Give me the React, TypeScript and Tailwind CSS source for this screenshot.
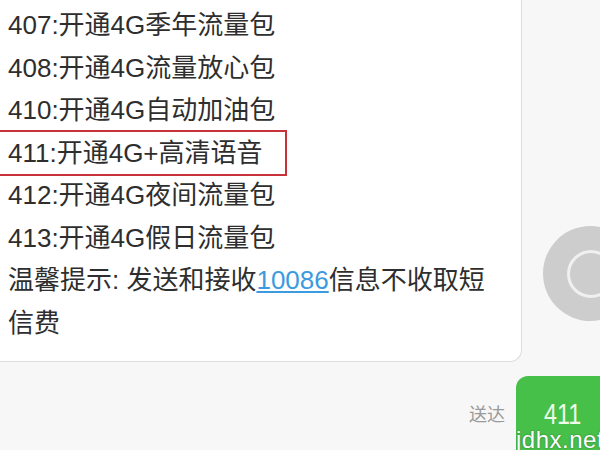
const lines = [
  "407:开通4G季年流量包",
  "408:开通4G流量放心包",
  "410:开通4G自动加油包",
  "411:开通4G+高清语音",
  "412:开通4G夜间流量包",
  "413:开通4G假日流量包",
];

export default function App() {
  return (
    <div
      className="relative w-[600px] h-[450px] overflow-hidden bg-[#f7f7f7]"
      style={{ fontFamily: '"Liberation Sans", "Noto Sans CJK SC", sans-serif' }}
    >
      {/* incoming message row */}
      <div className="flex">
        <div className="w-[522px] shrink-0 bg-white border-r border-b border-[#dcdcdc] rounded-br-[12px] pl-[8px] pt-[4px] pb-[17px] text-[26px] leading-[42.5px] text-[#2e2e2e]">
          {lines.map((l) => (
            <div key={l} className="relative whitespace-nowrap">
              {l.startsWith("411") && (
                <span className="absolute -top-[2px] -bottom-[2px] -left-[20px] w-[299px] border-2 border-[#c8323a]" />
              )}
              {l}
            </div>
          ))}
          <div className="pr-[20px]">
            温馨提示: 发送和接收
            <span className="text-[#3b9ae0] underline underline-offset-2">10086</span>
            信息不收取短信费
          </div>
        </div>

        {/* avatar */}
        <div className="flex items-end pb-[41px] pl-[21px]">
          <div className="w-[95px] h-[95px] shrink-0 rounded-full bg-[#cdcdcd] flex items-center justify-center">
            <div className="w-[48px] h-[48px] rounded-full border-[3px] border-[#f0f0f0]" />
          </div>
        </div>
      </div>

      {/* outgoing message row */}
      <div className="flex items-start justify-end mt-[14px] -mr-[20px]">
        <span className="mt-[26px] mr-[11px] text-[18px] text-[#9a9a9a]">送达</span>
        <div className="w-[104px] h-[80px] rounded-tl-[12px] bg-[#47c04a] pl-[28px] pt-[20px] text-[30px] leading-[36px] text-[#eefbe8]">
          <span className="inline-block origin-left scale-x-[0.78]">411</span>
        </div>
      </div>

      {/* watermark */}
      <span
        className="absolute left-[516px] bottom-[-4px] text-[24px] leading-[28px] tracking-[0.5px] text-white whitespace-nowrap"
        style={{ textShadow: "0 0 2px #2f6e2f" }}
      >
        jdhx.net
      </span>
    </div>
  );
}
